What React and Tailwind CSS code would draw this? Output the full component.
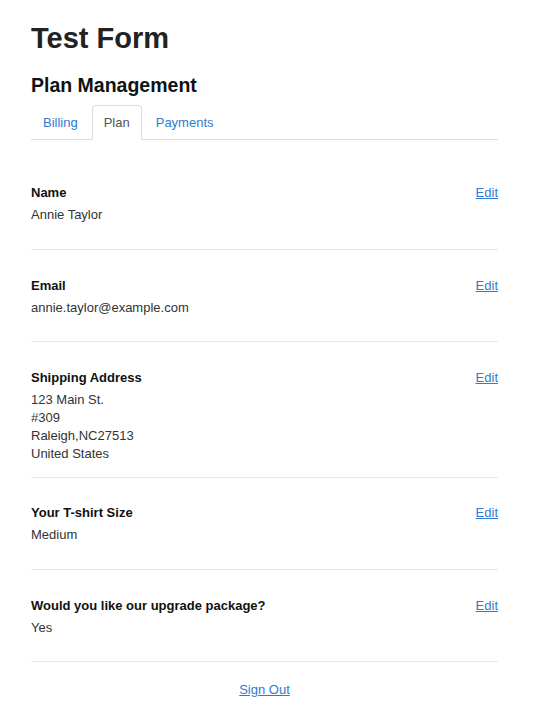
import React from 'react'

const FIELDS = [
  { label: 'Name', lines: ['Annie Taylor'], pt: 'pt-[44px]', pb: 'pb-[25px]' },
  { label: 'Email', lines: ['annie.taylor@example.com'], pt: 'pt-[27px]', pb: 'pb-[24px]' },
  { label: 'Shipping Address', lines: ['123 Main St.', '#309', 'Raleigh,NC27513', 'United States'], pt: 'pt-[27px]', pb: 'pb-[14px]' },
  { label: 'Your T-shirt Size', lines: ['Medium'], pt: 'pt-[26px]', pb: 'pb-[25px]' },
  { label: 'Would you like our upgrade package?', lines: ['Yes'], pt: 'pt-[27px]', pb: 'pb-[24px]' },
]

const TABS = ['Billing', 'Plan', 'Payments']

export default function App() {
  return (
    <div className="min-h-[720px] bg-white pl-[31px] text-[13px] text-[#333] [font-family:'Liberation_Sans',Arial,sans-serif]">
      <div className="w-[467px]">
        <h1 className="mt-[18px] text-[29px] font-bold leading-[40px] text-[#222]">Test Form</h1>
        <h3 className="mt-[16px] text-[19.5px] font-bold leading-[22px] text-[#111]">Plan Management</h3>

        {/* Tabs */}
        <ul className="mt-[9px] flex gap-[2px] border-b border-[#ddd]">
          {TABS.map(t => (
            <li key={t} className="-mb-px">
              {t === 'Plan' ? (
                <span className="block h-[35px] rounded-t-[4px] border border-[#ddd] border-b-white bg-white px-[11px] leading-[33px] text-[#555]">
                  {t}
                </span>
              ) : (
                <a href="#" className="block h-[35px] border border-transparent px-[11px] leading-[33px] text-[#2f7bd1]">
                  {t}
                </a>
              )}
            </li>
          ))}
        </ul>

        {/* Fields */}
        {FIELDS.map(f => (
          <div key={f.label} className={`border-b border-[#e8e8e8] ${f.pt} ${f.pb}`}>
            <div className="mb-[4px] flex items-center justify-between leading-[18px]">
              <span className="font-bold text-[#111]">{f.label}</span>
              <a href="#" className="text-[#2f7bd1] underline">Edit</a>
            </div>
            {f.lines.map(l => (
              <p key={l} className="leading-[18px]">{l}</p>
            ))}
          </div>
        ))}

        <div className="pt-[19px] text-center leading-[18px]">
          <a href="#" className="text-[#2f7bd1] underline">Sign Out</a>
        </div>
      </div>
    </div>
  )
}
